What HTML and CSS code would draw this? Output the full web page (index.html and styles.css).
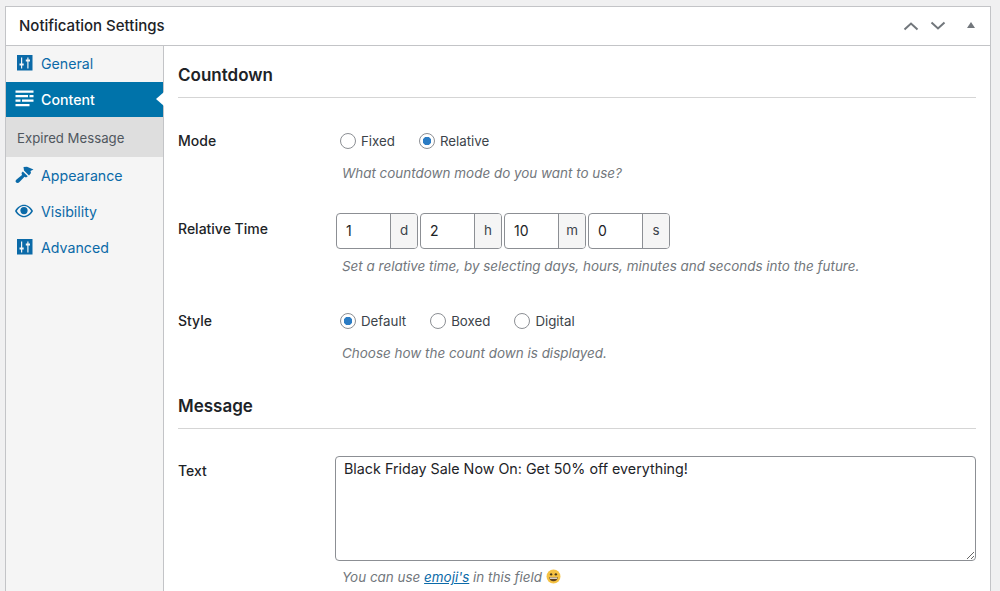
FILE: index.html
```html
<!DOCTYPE html>
<html lang="en">
	<head>
		<meta charset="UTF-8" />
		<meta name="viewport" content="width=device-width, initial-scale=1.0" />
		<title>Notification Settings</title>
		<link rel="stylesheet" href="styles.css">
	</head>
	<body>
		<div class="panel">
			<div class="panel-header">
				<h2>Notification Settings</h2>
				<div class="panel-actions">
					<svg class="chevron" width="16" height="10" viewBox="0 0 16 10"><path d="M1.500 8.500 8 2.500l6.500 6"/></svg>
					<svg class="chevron" width="16" height="10" viewBox="0 0 16 10"><path d="M1.500 1.500 8 7.500l6.500-6"/></svg>
					<svg class="toggle" width="8" height="6" viewBox="0 0 8 6"><path d="M4 0l4 6H0z"/></svg>
				</div>
			</div>
			<div class="panel-body">
				<ul class="tabs">
					<li class="first">
						<a href="#">
							<svg class="tab-icon" width="20" height="20" viewBox="0 0 20 20"><path d="M2 2h15.500v15.500H2zM6 4.500v6H4.500v2H6v3h1.200v-3h1.500v-2H7.200v-6zM12.300 4.500v2h-1.500v2h1.500v7h1.200v-7H15v-2h-1.500v-2z" fill-rule="evenodd"/></svg>
							General
						</a>
					</li>
					<li class="active">
						<a href="#">
							<svg class="tab-icon" width="20" height="20" viewBox="0 0 20 20"><path d="M.5 1.500h18v2.200H.5zM.5 6h12.500v2.200H.5zM14.500 6h4v2.200h-4zM.5 10.500h5v2.200h-5zM7 10.500h11.500v2.200H7zM.5 15h14v2.200H.5z"/></svg>
							Content
						</a>
					</li>
					<li class="sub"><a href="#">Expired Message</a></li>
					<li>
						<a href="#">
							<svg class="tab-icon" width="20" height="20" viewBox="0 0 20 20"><path d="M8.500 2 12 1.800l6.500 2.700-3 1.500.5 2-2 2.500-5-5z"/><path d="M7.800 6.500l5 4.700-1.800 1.300-1.500-.7-5 5.200c-1 1.200-3 1.200-3.700 0-.5-1-.2-1.500.7-2.500L7 10l-.5-2z"/></svg>
							Appearance
						</a>
					</li>
					<li>
						<a href="#">
							<svg class="tab-icon" width="20" height="20" viewBox="0 0 20 20"><g transform="translate(0 1) scale(.9)"><path d="M19.700 9.400C17.700 5.800 14 3 10 3S2.300 5.800.3 9.400L0 10l.3.600c2 3.600 5.700 6.400 9.700 6.400s7.700-2.800 9.700-6.400l.3-.6-.3-.6zM10 15.500c-3.100 0-6.200-2.200-8-5.500 1.800-3.300 4.900-5.500 8-5.500s6.200 2.200 8 5.500c-1.800 3.300-4.900 5.500-8 5.500z"/><circle cx="10" cy="9.500" r="4"/></g></svg>
							Visibility
						</a>
					</li>
					<li>
						<a href="#">
							<svg class="tab-icon" width="20" height="20" viewBox="0 0 20 20"><path d="M2 2h15.500v15.500H2zM6 4.500v6H4.500v2H6v3h1.200v-3h1.500v-2H7.200v-6zM12.300 4.500v2h-1.500v2h1.500v7h1.200v-7H15v-2h-1.500v-2z" fill-rule="evenodd"/></svg>
							Advanced
						</a>
					</li>
				</ul>
				<div class="content">
					<h3 class="section-title">Countdown</h3>

					<div class="field field-mode">
						<label class="field-label">Mode</label>
						<div class="field-main">
							<div class="radios">
								<label class="radio"><span class="radio-dot"></span>Fixed</label>
								<label class="radio"><span class="radio-dot checked"></span>Relative</label>
							</div>
							<p class="help">What countdown mode do you want to use?</p>
						</div>
					</div>

					<div class="field field-time">
						<label class="field-label">Relative Time</label>
						<div class="field-main">
							<div class="time-inputs">
								<div class="time-input"><span class="time-value">1</span><span class="time-unit">d</span></div>
								<div class="time-input"><span class="time-value">2</span><span class="time-unit">h</span></div>
								<div class="time-input"><span class="time-value">10</span><span class="time-unit">m</span></div>
								<div class="time-input"><span class="time-value">0</span><span class="time-unit">s</span></div>
							</div>
							<p class="help">Set a relative time, by selecting days, hours, minutes and seconds into the future.</p>
						</div>
					</div>

					<div class="field field-style">
						<label class="field-label">Style</label>
						<div class="field-main">
							<div class="radios">
								<label class="radio"><span class="radio-dot checked"></span>Default</label>
								<label class="radio"><span class="radio-dot"></span>Boxed</label>
								<label class="radio"><span class="radio-dot"></span>Digital</label>
							</div>
							<p class="help">Choose how the count down is displayed.</p>
						</div>
					</div>

					<h3 class="section-title section-message">Message</h3>

					<div class="field field-text">
						<label class="field-label">Text</label>
						<div class="field-main">
							<textarea class="text-box">Black Friday Sale Now On: Get 50% off everything!</textarea>
							<p class="help">You can use <a href="#">emoji's</a> in this field <svg class="emoji" width="15" height="15" viewBox="0 0 14 14"><circle cx="7" cy="7" r="6.500" fill="#f5c243"/><circle cx="4.800" cy="5" r="1.100" fill="#4a3a1c"/><circle cx="9.200" cy="5" r="1.100" fill="#4a3a1c"/><path d="M3 7.700h8c0 2.300-1.800 3.800-4 3.800s-4-1.500-4-3.800z" fill="#5b3f1e"/><path d="M3.600 8h6.800v1.100H3.600z" fill="#fff"/></svg></p>
						</div>
					</div>
				</div>
			</div>
		</div>
	</body>
</html>
```

FILE: styles.css
```css
html,
body {
	height: 100%;
	overflow: hidden;
}

body {
	margin: 0;
	padding: 6px 9px 0 5px;
	box-sizing: border-box;
	background-color: #f0f0f1;
	font-family: Inter, "Liberation Sans", sans-serif;
	font-size: 14px;
	color: #1d2327;
}

/* no bottom border, the box carries on below the window */
.panel {
	display: flex;
	flex-direction: column;
	box-sizing: border-box;
	height: 100%;
	background-color: #fff;
	border: 1px solid #c3c4c7;
	border-bottom: none;
}

.panel-header {
	display: flex;
	flex: none;
	align-items: center;
	justify-content: space-between;
	height: 38px;
	border-bottom: 1px solid #c3c4c7;
}

.panel-header h2 {
	margin: 0 0 2px 13px;
	font-size: 15px;
	font-weight: 500;
	color: #1d2327;
}

.panel-actions {
	display: flex;
	align-items: center;
	gap: 11px;
	padding-right: 15px;
}

.chevron {
	fill: none;
	stroke: #72777c;
	stroke-width: 2;
}

.toggle {
	fill: #72777c;
	margin-left: 10px;
	margin-bottom: 2px;
}

.panel-body {
	display: flex;
	flex: 1;
	min-height: 0;
}

.tabs {
	flex: 0 0 158px;
	box-sizing: border-box;
	margin: 0;
	padding: 0;
	list-style: none;
	background-color: #f5f5f5;
	border-right: 1px solid #c3c4c7;
}

.tabs a {
	display: flex;
	align-items: center;
	gap: 6px;
	height: 36px;
	padding-left: 9px;
	font-size: 14.2px;
	color: #0b6aa8;
	text-decoration: none;
}

.tab-icon {
	fill: currentColor;
	flex: none;
}

.tabs .first a {
	box-sizing: border-box;
	padding-bottom: 2px;
}

.tabs .active {
	position: relative;
}

.tabs .active a {
	box-sizing: border-box;
	height: 35px;
	padding-bottom: 1px;
	background-color: #0073aa;
	color: #fff;
	font-weight: 500;
}

.tabs .active::after {
	content: "";
	position: absolute;
	right: -1px;
	top: 10px;
	border: 7px solid transparent;
	border-right: 8px solid #fff;
	border-left-width: 0;
}

.tabs .sub a {
	box-sizing: border-box;
	height: 40px;
	padding: 2px 0 0 11px;
	background-color: #dedede;
	color: #50575e;
	font-size: 13.2px;
}

.content {
	flex: 1;
	padding: 0 14px;
}

.section-title {
	margin: 0;
	padding: 18px 0 11px;
	height: 22px;
	line-height: 22px;
	font-size: 17px;
	font-weight: 600;
	color: #1d2327;
	border-bottom: 1px solid #d5d5d5;
}

.section-message {
	margin-top: 16px;
}

.field {
	display: flex;
}

.field-label {
	flex: 0 0 158px;
	font-size: 14px;
	font-weight: 500;
	color: #1d2327;
}

.field-main {
	flex: 1;
}

.field-mode {
	padding-top: 33px;
}

.field-time {
	padding-top: 32px;
}

.field-style {
	padding-top: 37px;
}

.field-text {
	padding-top: 27px;
}

.field-mode .field-label,
.field-style .field-label {
	line-height: 20px;
}

.field-time .field-label {
	padding-top: 7px;
}

.field-text .field-label {
	padding-top: 6px;
}

.radios {
	display: flex;
	gap: 24px;
	height: 20px;
	padding-left: 4px;
}

.radio {
	display: flex;
	align-items: center;
	gap: 5px;
	font-size: 13.3px;
	color: #3c434a;
}

.radio-dot {
	box-sizing: border-box;
	width: 16px;
	height: 16px;
	border: 1px solid #8c8f94;
	border-radius: 50%;
	background-color: #fff;
}

.radio-dot.checked {
	background: radial-gradient(circle, #2b7cc4 0 4px, #fff 4.500px);
}

.help {
	margin: 0;
	padding-left: 6px;
	font-size: 13.45px;
	font-style: italic;
	color: #72777c;
}

.field-mode .help,
.field-style .help {
	padding-top: 14px;
}

.help a {
	color: #0b6aa8;
}

.time-inputs {
	display: flex;
	gap: 2px;
}

.time-input {
	display: flex;
	width: 82px;
	height: 36px;
	box-sizing: border-box;
	border: 1px solid #8c8f94;
	border-radius: 4px;
	overflow: hidden;
}

.time-value {
	flex: 1;
	padding-left: 9px;
	line-height: 34px;
}

.time-unit {
	flex: 0 0 26px;
	text-align: center;
	line-height: 32px;
	font-size: 13.4px;
	color: #3c434a;
	background-color: #f5f5f5;
	border-left: 1px solid #8c8f94;
}

.field-time .help {
	padding-top: 9px;
}

.text-box {
	display: block;
	box-sizing: border-box;
	width: calc(100% + 1px);
	height: 105px;
	margin-left: -1px;
	padding: 3px 8px;
	border: 1px solid #8c8f94;
	border-radius: 4px;
	font-family: inherit;
	font-size: 14.3px;
	color: #1d2327;
}

.field-text .help {
	padding-top: 8px;
}

.emoji {
	vertical-align: -2px;
}
```
